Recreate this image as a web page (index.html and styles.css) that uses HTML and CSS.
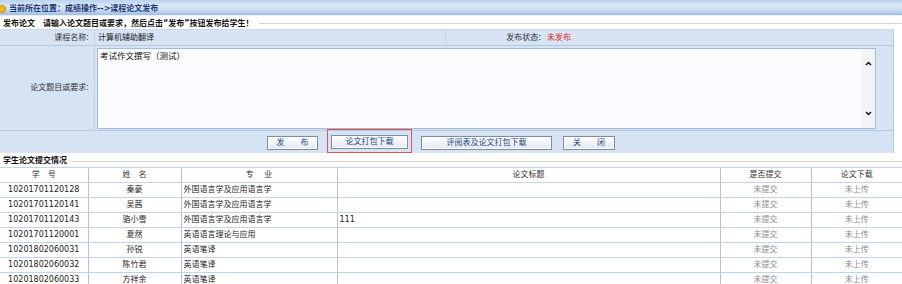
FILE: index.html
```html
<!DOCTYPE html>
<html lang="zh-CN">
<head>
<meta charset="utf-8">
<title>课程论文发布</title>
<link rel="stylesheet" href="styles.css">
</head>
<body>
<div class="topbar">
  <svg class="loc-icon" width="8" height="10" viewBox="0 0 8 10"><circle cx="2" cy="5" r="3.5" fill="#f6b81c" stroke="#d08a0a" stroke-width="1"/></svg>
  <span class="crumb">当前所在位置：成绩操作--&gt;课程论文发布</span>
</div>
<div class="legend">
  <span>发布论文</span><span class="legend-note">请输入论文题目或要求，然后点击“发布”按钮发布给学生！</span>
  <span class="legend-line"></span>
</div>
<div class="form">
  <div class="cell label r1 sep">课程名称:</div>
  <div class="cell value r1">计算机辅助翻译</div>
  <div class="cell label r1 sepl">发布状态:</div>
  <div class="cell value r1 status">未发布</div>
  <div class="cell label r2 sep">论文题目或要求:</div>
  <div class="cell r2 ta-cell">
    <div class="textarea">
      <div class="ta-text">考试作文撰写（测试）</div>
      <div class="ta-scroll">
        <svg width="7" height="5" viewBox="0 0 7 5"><path d="M1 4 L3.5 1.5 L6 4" fill="none" stroke="#111" stroke-width="1.5"/></svg>
        <svg width="7" height="5" viewBox="0 0 7 5"><path d="M1 1 L3.5 3.5 L6 1" fill="none" stroke="#111" stroke-width="1.5"/></svg>
      </div>
    </div>
  </div>
  <div class="cell r3 buttons">
    <button class="btn b1" type="button">发　　布</button>
    <span class="hl"><button class="btn b2" type="button">论文打包下载</button></span>
    <button class="btn b3" type="button">评阅表及论文打包下载</button>
    <button class="btn b4" type="button">关　　闭</button>
  </div>
</div>
<div class="legend legend2">
  <span>学生论文提交情况</span>
  <span class="legend-line"></span>
</div>
<table class="grid">
  <colgroup>
    <col class="c1"><col class="c2"><col class="c3"><col class="c4"><col class="c5"><col class="c6">
  </colgroup>
  <thead>
    <tr><th>学　号</th><th>姓　名</th><th>专　 业</th><th>论文标题</th><th>是否提交</th><th>论文下载</th></tr>
  </thead>
  <tbody>
    <tr><td class="ctr">10201701120128</td><td class="ctr">秦豪</td><td>外国语言学及应用语言学</td><td></td><td class="ctr muted">未提交</td><td class="ctr muted">未上传</td></tr>
    <tr><td class="ctr">10201701120141</td><td class="ctr">吴茜</td><td>外国语言学及应用语言学</td><td></td><td class="ctr muted">未提交</td><td class="ctr muted">未上传</td></tr>
    <tr><td class="ctr">10201701120143</td><td class="ctr">骆小雪</td><td>外国语言学及应用语言学</td><td>111</td><td class="ctr muted">未提交</td><td class="ctr muted">未上传</td></tr>
    <tr><td class="ctr">10201701120001</td><td class="ctr">夏然</td><td>英语语言理论与应用</td><td></td><td class="ctr muted">未提交</td><td class="ctr muted">未上传</td></tr>
    <tr><td class="ctr">10201802060031</td><td class="ctr">孙锐</td><td>英语笔译</td><td></td><td class="ctr muted">未提交</td><td class="ctr muted">未上传</td></tr>
    <tr><td class="ctr">10201802060032</td><td class="ctr">陈竹君</td><td>英语笔译</td><td></td><td class="ctr muted">未提交</td><td class="ctr muted">未上传</td></tr>
    <tr><td class="ctr">10201802060033</td><td class="ctr">方祥余</td><td>英语笔译</td><td></td><td class="ctr muted">未提交</td><td class="ctr muted">未上传</td></tr>
  </tbody>
</table>
</body>
</html>
```
FILE: styles.css
```css
* { box-sizing: border-box; }
body {
  margin: 0;
  width: 902px;
  background: #fff;
  color: #222;
  font-family: "DejaVu Sans", "Noto Sans CJK SC", sans-serif;
  font-size: 8px;
  line-height: 1;
  overflow: hidden;
}
.topbar {
  height: 16px;
  display: flex;
  align-items: center;
  padding-top: 2px;
  background: linear-gradient(#b9d1ed, #dbe8f6 35%, #c6d9f0 70%, #9fbde4);
  border-bottom: 1px solid #e9eff7;
}
.loc-icon { flex: none; margin-right: 1px; }
.crumb { font-weight: bold; color: #1c3a76; }
.legend {
  height: 13px;
  display: flex;
  align-items: center;
  padding: 2px 0 0 3px;
  font-weight: bold;
  color: #111;
}
.legend-note { margin-left: 8px; }
.legend-line {
  flex: 1;
  margin-left: 5px;
  border-top: 1px solid #d2d2d2;
}
.form {
  display: grid;
  grid-template-columns: 95px 350px 100px 348px;
  width: 894px;
  background: #d5e3f3;
  border-right: 1px solid #b9cadf;
  border-top: 1px solid #c9d8ea;
}
.cell { display: flex; align-items: center; }
.r1 { height: 16px; border-bottom: 1px solid #b5c8df; }
.r2 { height: 85px; border-bottom: 1px solid #b5c8df; }
.label { justify-content: flex-end; padding-right: 5px; color: #333; }
.sep { border-right: 1px solid #c3d4e8; }
.sepl { border-left: 1px solid #c3d4e8; padding-right: 4px; }
.value { padding-left: 3px; color: #222; }
.status { color: #e0211b; padding-left: 2px; }
.ta-cell { grid-column: 2 / 5; padding: 2px 17px 1px 2px; align-items: stretch; }
.textarea {
  flex: 1;
  display: flex;
  border: 1px solid #a9bbd2;
  background: #f9fbfe;
}
.ta-text { flex: 1; padding: 3px 0 0 2px; color: #111; font-size: 8.5px; }
.ta-scroll {
  width: 13px;
  background: #f1f3f6;
  display: flex;
  flex-direction: column;
  justify-content: space-between;
  align-items: center;
  padding: 12px 0 12px;
}
.r3 { grid-column: 1 / 5; height: 22px; }
.buttons { padding-left: 267px; }
.btn {
  height: 14px;
  padding: 0;
  border: 1px solid #7b8ca6;
  background: linear-gradient(#fdfeff, #e2e9f2);
  box-shadow: inset 0 0 0 1px #fff;
  color: #1d3e80;
  font-family: inherit;
  font-size: 8px;
  line-height: 12px;
  margin-top: 1px;
}
.b1 { width: 51px; }
.b2 { width: 77px; margin-top: 0; }
.b3 { width: 131px; margin-left: 9px; }
.b4 { width: 52px; margin-left: 11px; }
.hl {
  display: flex;
  margin-left: 9px;
  margin-top: -3px;
  padding: 5px 3px 3px 3px;
  border: 1px solid #e0534f;
}
.legend2 { height: 14px; padding-top: 2px; }
.grid {
  width: 902px;
  table-layout: fixed;
  border-collapse: collapse;
  margin-top: 0;
}
.c1 { width: 88px; }
.c2 { width: 93px; }
.c3 { width: 156px; }
.c4 { width: 383px; }
.c5 { width: 91px; }
.c6 { width: 91px; }
.grid th, .grid td {
  height: 15px;
  padding: 0 0 0 2px;
  border: 1px solid #c4d3e7;
  border-left-color: #b2c4dc;
  border-right-color: #b2c4dc;
  text-align: left;
  white-space: nowrap;
  overflow: hidden;
}
.grid th {
  font-weight: normal;
  color: #333;
  text-align: center;
  padding: 0;
}
.grid tr > :first-child { border-left: none; }
.grid tr > :last-child { border-right: none; }
.grid .ctr { text-align: center; padding: 0; }
.grid .muted { color: #8a8a8a; }
```
